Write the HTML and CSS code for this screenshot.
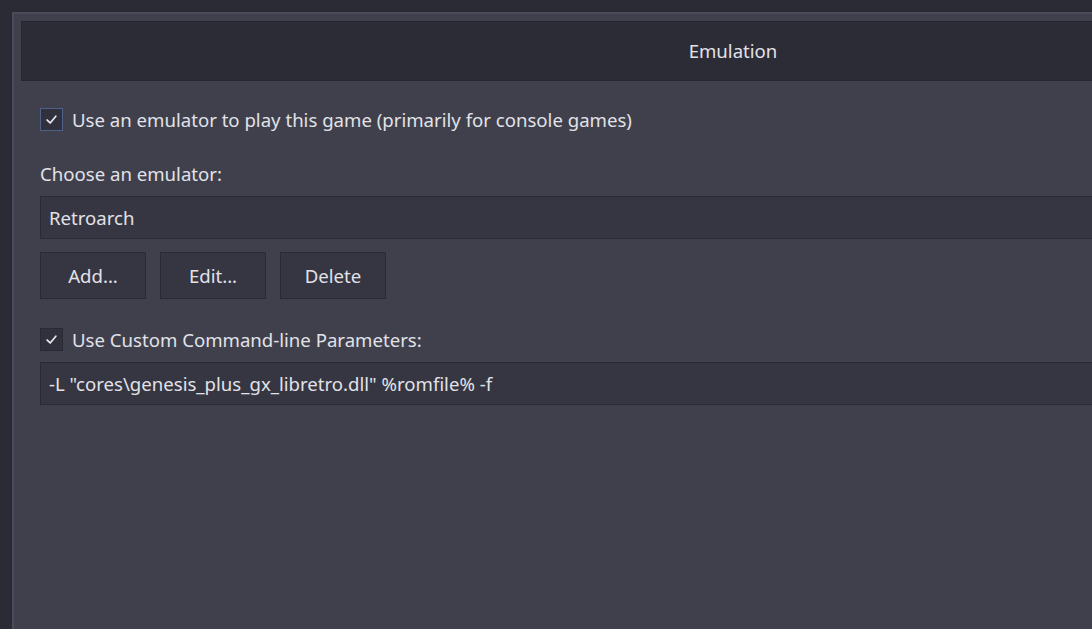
FILE: index.html
```html
<!DOCTYPE html>
<html>
<head>
<meta charset="utf-8">
<link rel="stylesheet" href="styles.css">
</head>
<body>
<div class="panel">
  <div class="header">Emulation</div>
  <div class="content">
    <label class="check-row first">
      <span class="checkbox focused"><svg viewBox="0 0 12 12" width="13" height="13"><path d="M2 6.5 L4.8 9.2 L10 3" fill="none" stroke="#e8e8ee" stroke-width="1.6" stroke-linecap="round" stroke-linejoin="round"/></svg></span>
      <span class="label">Use an emulator to play this game (primarily for console games)</span>
    </label>
    <div class="field-label">Choose an emulator:</div>
    <div class="combo">Retroarch</div>
    <div class="buttons">
      <button class="btn">Add...</button>
      <button class="btn">Edit...</button>
      <button class="btn">Delete</button>
    </div>
    <label class="check-row second">
      <span class="checkbox"><svg viewBox="0 0 12 12" width="13" height="13"><path d="M2 6.5 L4.8 9.2 L10 3" fill="none" stroke="#e8e8ee" stroke-width="1.6" stroke-linecap="round" stroke-linejoin="round"/></svg></span>
      <span class="label">Use Custom Command-line Parameters:</span>
    </label>
    <div class="textbox">-L "cores\genesis_plus_gx_libretro.dll" %romfile% -f</div>
  </div>
</div>
</body>
</html>
```
FILE: styles.css
```css
html, body {
  margin: 0;
  padding: 0;
  background: #2b2b35;
  overflow: hidden;
  width: 1092px;
  height: 629px;
}
body {
  font-family: "Noto Sans", "Open Sans", sans-serif;
  font-size: 18.6px;
  color: #e2e2e8;
  padding: 12px 0 0 12px;
  box-sizing: border-box;
}
.panel {
  height: 100%;
  background: #3f404c;
  border: 2px solid #4b4c5b;
  border-right: none;
  border-bottom: none;
  padding: 7px 0 0 7px;
  box-sizing: border-box;
}
.header {
  height: 60px;
  background: #2c2c37;
  border: 1px solid #26262f;
  border-right: none;
  box-sizing: border-box;
  display: flex;
  align-items: center;
  justify-content: center;
  padding-left: 352px;
  padding-bottom: 2px;
}
.content {
  padding: 26px 0 0 19px;
}
.check-row {
  display: flex;
  align-items: center;
  gap: 9px;
  height: 24px;
}
.checkbox {
  width: 23px;
  height: 23px;
  box-sizing: border-box;
  background: #30313d;
  border: 1px solid #2a2a34;
  display: flex;
  align-items: center;
  justify-content: center;
}
.checkbox.focused {
  border-color: #4d6189;
}
.field-label {
  margin-top: 31px;
  height: 24px;
  line-height: 24px;
}
.combo, .textbox {
  height: 43px;
  background: #353642;
  border: 1px solid #2a2a34;
  border-right: none;
  box-sizing: border-box;
  display: flex;
  align-items: center;
  padding-left: 8px;
}
.combo {
  margin-top: 10px;
}
.buttons {
  display: flex;
  gap: 14px;
  margin-top: 13px;
}
.btn {
  width: 106px;
  height: 47px;
  background: #353642;
  border: 1px solid #2a2a34;
  color: #e2e2e8;
  font-family: inherit;
  font-size: 18.6px;
  padding: 0;
}
.check-row.second {
  margin-top: 28px;
}
.textbox {
  margin-top: 11px;
}
```
